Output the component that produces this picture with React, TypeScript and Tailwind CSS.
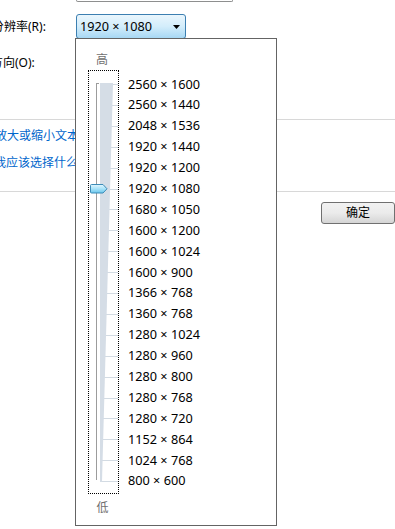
const RESOLUTIONS = [
  '2560 × 1600',
  '2560 × 1440',
  '2048 × 1536',
  '1920 × 1440',
  '1920 × 1200',
  '1920 × 1080',
  '1680 × 1050',
  '1600 × 1200',
  '1600 × 1024',
  '1600 × 900',
  '1366 × 768',
  '1360 × 768',
  '1280 × 1024',
  '1280 × 960',
  '1280 × 800',
  '1280 × 768',
  '1280 × 720',
  '1152 × 864',
  '1024 × 768',
  '800 × 600',
];

const ROW = 20.9;

function SliderTrack() {
  // coords are relative to the inside of the dotted focus box (89,71)
  const ticks = RESOLUTIONS.map((_, i) => 13 + ROW * i);
  return (
    <svg width="29" height="422" viewBox="0 0 29 422" className="block">
      <defs>
        <linearGradient id="thumb" x1="0" y1="0" x2="0" y2="1">
          <stop offset="0" stopColor="#e4f7fe" />
          <stop offset="0.5" stopColor="#a9e3f9" />
          <stop offset="1" stopColor="#6cc7ec" />
        </linearGradient>
      </defs>
      {ticks.map((y) => (
        <line key={y} x1="11" y1={Math.round(y) + 0.5} x2="29" y2={Math.round(y) + 0.5} stroke="#d3dbe3" strokeWidth="1" />
      ))}
      <polygon points="11,12 24,12 13,411 11,411" fill="#d5dde6" />
      <line x1="7.5" y1="12" x2="7.5" y2="409" stroke="#9c9c9c" strokeWidth="1" />
      <line x1="7" y1="12.5" x2="10" y2="12.5" stroke="#9c9c9c" strokeWidth="1" />
      <path
        d="M2.5 113.5 H14 L18 117.8 L14 122 H2.5 Q1.5 122 1.5 121 V114.5 Q1.5 113.5 2.5 113.5 Z"
        fill="url(#thumb)"
        stroke="#3d8cb8"
        strokeWidth="1"
        strokeLinejoin="round"
      />
    </svg>
  );
}

function ResolutionDropdown() {
  return (
    <div className="absolute left-[75px] top-[38px] w-[202px] h-[488px] border border-[#646464] bg-white flex pl-[12px]">
      <div className="flex flex-col items-center w-[31px]">
        <div className="pt-[10px] pr-[3px] h-[31px] leading-[21px] text-[12px] text-[#707070]">高</div>
        <div className="w-[31px] h-[424px] border border-dotted border-black">
          <SliderTrack />
        </div>
        <div className="mt-[3px] pr-[2px] h-[21px] leading-[21px] text-[12px] text-[#707070]">低</div>
      </div>
      <ul className="ml-[9px] pt-[34.5px]">
        {RESOLUTIONS.map((r) => (
          <li key={r} className="h-[20.9px] leading-[20.9px] text-[12.7px] text-black whitespace-nowrap">
            {r}
          </li>
        ))}
      </ul>
    </div>
  );
}

export default function App() {
  return (
    <div
      className="relative w-[395px] h-[529px] overflow-hidden bg-white text-[12px] text-black"
      style={{ fontFamily: '"Noto Sans", "Noto Sans CJK SC", sans-serif' }}
    >
      {/* bottom edge of the field above */}
      <div className="ml-[76px] w-[157px] h-[2px] border-x border-b border-[#8e8f8f] rounded-b-[3px]" />

      <div className="mt-[12px] flex items-center h-[25px]">
        <div className="-ml-[8px] w-[84px] whitespace-nowrap">分辨率(R):</div>
        <div className="w-[110px] h-[25px] rounded-[3px] border border-[#3c7fb1] bg-gradient-to-b from-[#eaf6fd] via-[#d3edfb] to-[#a7d8f4] flex items-center pl-[3px] pr-[4px]">
          <span className="text-[12.7px] flex-1 whitespace-nowrap">1920 × 1080</span>
          <svg width="7" height="4" viewBox="0 0 7 4" className="mr-[1px]">
            <polygon points="0,0 7,0 3.5,4" fill="#000" />
          </svg>
        </div>
      </div>

      <div className="mt-[15px] -ml-[9px] h-[18px] leading-[18px] whitespace-nowrap">方向(O):</div>

      <div className="mt-[47px] h-px bg-[#d8d8d8]" />
      <div className="mt-[7px] -ml-[5px] h-[18px] leading-[18px] text-[#0066cc] whitespace-nowrap">放大或缩小文本和其他项目</div>
      <div className="mt-[9px] -ml-[6px] h-[18px] leading-[18px] text-[#0066cc] whitespace-nowrap">我应该选择什么显示器设置？</div>
      <div className="mt-[19px] h-px bg-[#d8d8d8]" />

      <div className="mt-[10px] flex justify-end">
        <button className="w-[74px] h-[22px] rounded-[3px] border border-[#707070] bg-gradient-to-b from-[#f2f2f2] via-[#ebebeb] to-[#d5d5d5] text-[12px] leading-[20px] text-black">
          确定
        </button>
      </div>

      <ResolutionDropdown />
    </div>
  );
}
